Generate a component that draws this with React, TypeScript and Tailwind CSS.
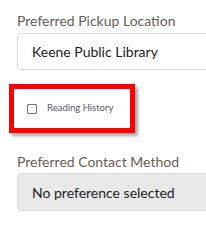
export default function App() {
  // STYLES
  const labelClass = "block text-[14px] leading-[18px] text-[#6b5d52]";
  const fieldClass = "w-[230px] h-[37px] flex items-center pl-[14px] rounded-[4px] border border-[#dcdcdc] text-[14px] text-[#222]";

  return (
    <div className="w-[206px] h-[226px] overflow-hidden bg-white pl-[17px] pt-[12px] font-['Lato','Liberation_Sans',sans-serif]">
      {/* PICKUP LOCATION */}
      <label className={labelClass}>Preferred Pickup Location</label>
      <div className={`${fieldClass} mt-[3px] bg-white`}>Keene Public Library</div>

      {/* READING HISTORY (HIGHLIGHTED) */}
      <div className="-ml-[8px] mt-[14px] w-[126px] h-[49px] border-[5px] border-[#ff0000] shadow-[3px_3px_3px_rgba(0,0,0,0.35)] flex items-center pl-[13px] gap-[10px]">
        <span className="w-[10px] h-[10px] border border-[#777] rounded-[1px] bg-white"></span>
        <span className="text-[9.5px] text-[#555a66]">Reading History</span>
      </div>

      {/* CONTACT METHOD */}
      <label className={`${labelClass} mt-[20px]`}>Preferred Contact Method</label>
      <div className={`${fieldClass} mt-[2px] h-[38px] bg-[#e9e9e9]`}>No preference selected</div>
    </div>
  );
}
